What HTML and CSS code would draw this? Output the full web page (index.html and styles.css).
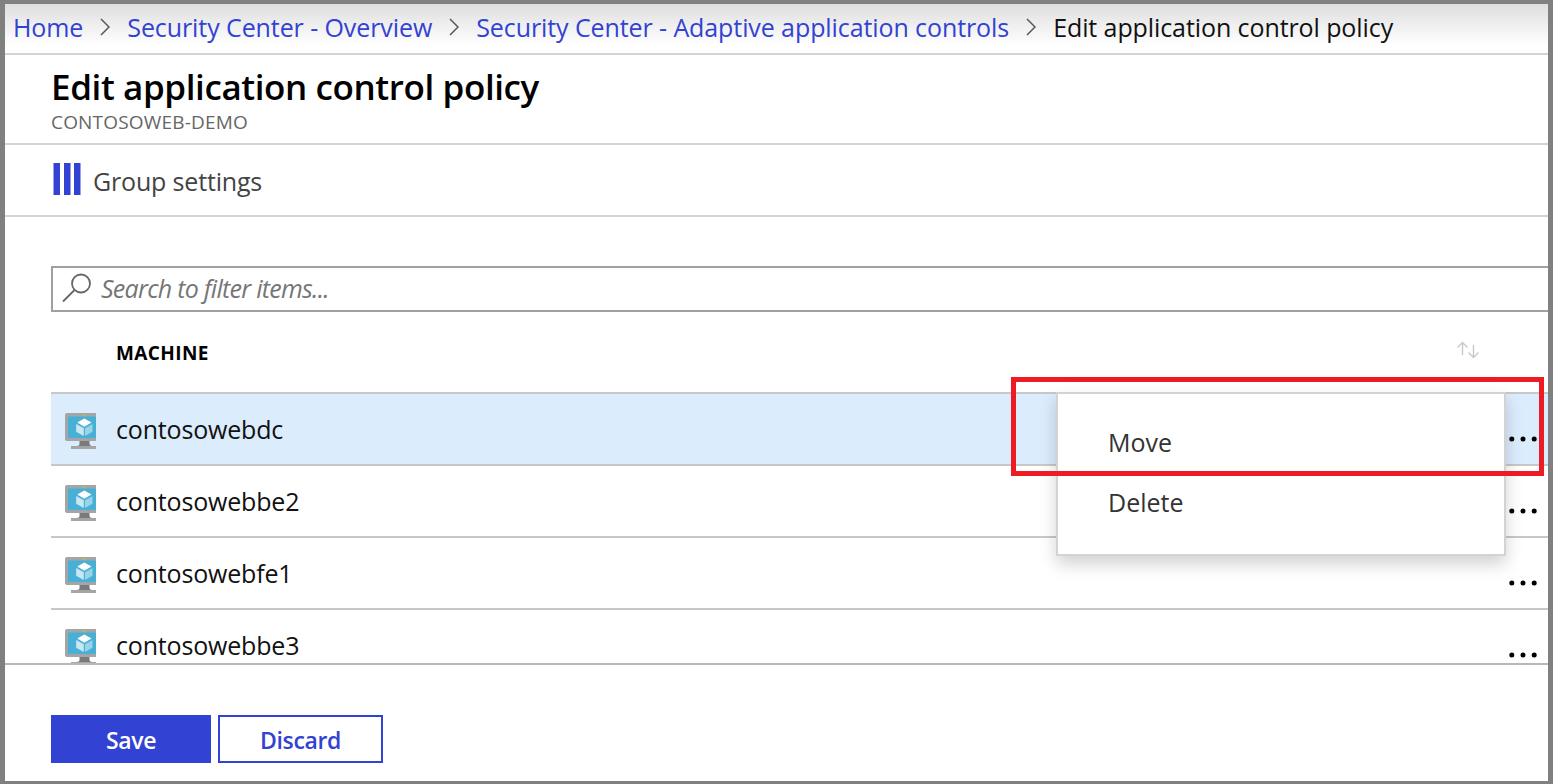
FILE: index.html
```html
<!DOCTYPE html>
<html lang="en">
<head>
<meta charset="utf-8">
<title>Edit application control policy</title>
<link rel="stylesheet" href="styles.css">
</head>
<body>
<svg class="defs" aria-hidden="true">
  <symbol id="vm" viewBox="0 0 31 36">
    <path d="M2 0H31V28H2Q0 28 0 26V2Q0 0 2 0Z" fill="#a3a5a7"/>
    <path d="M3 3.500H31V25H3Z" fill="#48b0d5"/>
    <path d="M14.500 28H24.500V31Q25 33 27 33H11Q14.500 33 14.500 31Z" fill="#7a7a7a"/>
    <path d="M6 33H31V36H6Z" fill="#a3a5a7"/>
    <path d="M19.300 5.500L26.500 9.500L19.300 13.800L12.300 9.500Z" fill="#fff"/>
    <path d="M11.200 11L18.800 15.200V23L11.200 18.800Z" fill="#c9e7f3"/>
    <path d="M27.500 11L20 15.200V23L27.500 18.800Z" fill="#9ad2e8"/>
    <path d="M18 1.300H20V2.800H18Z" fill="#a5cf3b"/>
  </symbol>
  <symbol id="dots" viewBox="0 0 28 6">
    <circle cx="2.800" cy="3" r="2.500"/><circle cx="14" cy="3" r="2.500"/><circle cx="25.200" cy="3" r="2.500"/>
  </symbol>
  <symbol id="chev" viewBox="0 0 10 18">
    <path d="M1 1L9 9L1 17" fill="none" stroke="#555" stroke-width="1.500"/>
  </symbol>
</svg>
<div class="window">
  <nav class="crumbs">
    <a>Home</a><svg class="chev"><use href="#chev"/></svg>
    <a>Security Center - Overview</a><svg class="chev"><use href="#chev"/></svg>
    <a>Security Center - Adaptive application controls</a><svg class="chev"><use href="#chev"/></svg>
    <span>Edit application control policy</span>
  </nav>
  <header class="header">
    <h1 class="title">Edit application control policy</h1>
    <div class="subtitle">CONTOSOWEB-DEMO</div>
  </header>
  <div class="toolbar">
    <svg class="bars" viewBox="0 0 28 32"><path d="M0.500 0H7V32H0.500ZM11 0H17.500V32H11ZM21 0H27.500V32H21Z" fill="#3242d2"/></svg>
    <span class="toolbar-label">Group settings</span>
  </div>
  <main class="content">
    <div class="search">
      <svg class="glass" viewBox="0 0 30 30"><circle cx="19" cy="10.500" r="9"/><path d="M12.500 17L1 28.500"/></svg>
      <span class="placeholder">Search to filter items...</span>
    </div>
    <div class="thead">
      <span class="col">MACHINE</span>
      <svg class="sort" viewBox="0 0 22 18"><path d="M5.500 14V1.500M0.500 6.500L5.500 1.500L10.500 6.500M16.500 4V16.500M11.500 11.500L16.500 16.500L21.500 11.500"/></svg>
    </div>
    <div class="row selected"><svg class="vm"><use href="#vm"/></svg><span class="name">contosowebdc</span><svg class="dots"><use href="#dots"/></svg></div>
    <div class="row"><svg class="vm"><use href="#vm"/></svg><span class="name">contosowebbe2</span><svg class="dots"><use href="#dots"/></svg></div>
    <div class="row"><svg class="vm"><use href="#vm"/></svg><span class="name">contosowebfe1</span><svg class="dots"><use href="#dots"/></svg></div>
    <div class="row"><svg class="vm"><use href="#vm"/></svg><span class="name">contosowebbe3</span><svg class="dots"><use href="#dots"/></svg></div>
  </main>
  <footer class="footer">
    <button class="btn primary">Save</button>
    <button class="btn">Discard</button>
  </footer>
</div>
<div class="menu"><div class="item">Move</div><div class="item">Delete</div></div>
<div class="highlight"></div>
</body>
</html>
```
FILE: styles.css
```css
* { box-sizing: border-box; }
body {
  margin: 0;
  width: 1553px;
  height: 784px;
  position: relative;
  overflow: hidden;
  background: #808080;
  color: #111;
  font: 25px/30px "Open Sans", "Noto Sans", sans-serif;
}
.defs { position: absolute; width: 0; height: 0; }
.window {
  height: 784px;
  border: solid #808080;
  border-width: 4px 5px 3px;
  background: #fff;
  display: flex;
  flex-direction: column;
}
.crumbs {
  flex: none;
  height: 51px;
  padding: 0 0 3px 8px;
  border-bottom: 2px solid #d3d3d3;
  background: linear-gradient(#dedede, #fff 84%);
  display: flex;
  align-items: center;
  white-space: nowrap;
  letter-spacing: -0.09px;
}
.crumbs a { color: #3242d2; }
.chev { width: 10px; height: 18px; margin: 0 17px; flex: none; }
.header {
  flex: none;
  height: 90px;
  padding: 10px 0 0 46px;
  border-bottom: 2px solid #d3d3d3;
}
.title {
  margin: 0;
  font-size: 35px;
  line-height: 44px;
  font-weight: 600;
  letter-spacing: -0.4px;
  color: #000;
}
.subtitle { font-size: 19px; line-height: 26px; letter-spacing: 0.18px; color: #666; }
.toolbar {
  flex: none;
  height: 72px;
  padding: 0 0 2px 48px;
  border-bottom: 2px solid #d3d3d3;
  display: flex;
  align-items: center;
  gap: 12px;
  color: #444;
}
.toolbar-label { padding-top: 4px; letter-spacing: -0.17px; }
.bars { width: 28px; height: 32px; }
.content {
  flex: none;
  height: 446px;
  padding: 49px 0 0 46px;
  overflow: hidden;
}
.search {
  height: 46px;
  border: 2px solid #a0a0a0;
  border-right: 0;
  padding: 0 0 2px 9px;
  display: flex;
  align-items: center;
  color: #767676;
  font-style: italic;
}
.glass { width: 30px; height: 30px; fill: none; stroke: #666; stroke-width: 1.800; }
.placeholder { margin-left: 9px; letter-spacing: -0.73px; }
.thead {
  height: 80px;
  padding: 0 69px 0 65px;
  display: flex;
  align-items: center;
  justify-content: space-between;
}
.col { padding-top: 2px; font-size: 19px; font-weight: 700; letter-spacing: 0.4px; color: #000; }
.sort { width: 22px; height: 18px; margin-bottom: 4px; fill: none; stroke: #c8c8c8; stroke-width: 1.400; }
.row {
  height: 72px;
  border-top: 2px solid #c8c8c8;
  padding: 0 11px 0 14px;
  display: flex;
  align-items: center;
}
.selected { background: #dbecfd; }
.vm { width: 31px; height: 36px; margin: 4px 20px 0 0; }
.name { flex: none; letter-spacing: -0.18px; }
.dots { width: 28px; height: 6px; margin: 19px 0 0 auto; }
.footer {
  flex: 1;
  border-top: 2px solid #b8b8b8;
  padding: 50px 0 0 46px;
  display: flex;
  gap: 7px;
}
.btn {
  width: 165px;
  height: 48px;
  border: 2px solid #3242d2;
  padding: 2px 0 0;
  background: #fff;
  color: #3242d2;
  font: 600 23px/30px "Open Sans", "Noto Sans", sans-serif;
  letter-spacing: -0.35px;
}
.primary { width: 160px; background: #3242d2; color: #fff; }
.menu {
  position: absolute;
  left: 1056px;
  top: 392px;
  width: 450px;
  height: 164px;
  border: 2px solid #d3d3d3;
  background: #fff;
  box-shadow: 0 8px 16px rgba(0, 0, 0, .18);
  padding: 18px 0 0 50px;
  color: #333;
}
.item { height: 60px; line-height: 60px; }
.highlight {
  position: absolute;
  left: 1011px;
  top: 377px;
  width: 533px;
  height: 99px;
  border: 5px solid #ed1c24;
}
```
